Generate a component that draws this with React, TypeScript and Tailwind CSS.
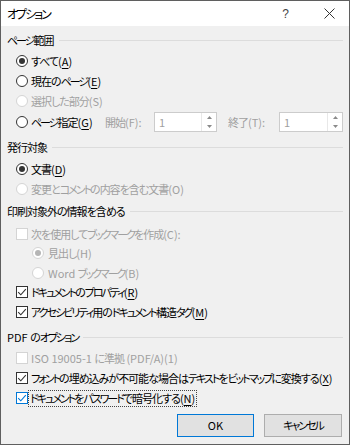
import React from "react";

function kind(ch: string): string {
  const c = ch.codePointAt(0) || 0;
  if (c >= 0x30a0 && c <= 0x30ff) return "k";
  if (c >= 0x3040 && c <= 0x309f) return "h";
  if (c >= 0x4e00 && c <= 0x9fff) return "c";
  return "l";
}

const TRACK: Record<string, string> = {
  k: "tracking-[-2px]",
  h: "tracking-[-1px]",
  c: "tracking-[-1px]",
  l: "",
};

function J({ s }: { s: string }) {
  const runs: { t: string; c: string }[] = [];
  for (const ch of s) {
    const c = kind(ch);
    const last = runs[runs.length - 1];
    if (last && last.c === c) last.t += ch;
    else runs.push({ t: ch, c });
  }
  return (
    <>
      {runs.map((r, i) =>
        r.c === "l" ? (
          <React.Fragment key={i}>{r.t}</React.Fragment>
        ) : (
          <span key={i} className={TRACK[r.c]}>
            {r.t}
          </span>
        )
      )}
    </>
  );
}

function U({ children }: { children: React.ReactNode }) {
  return <span className="underline underline-offset-[2px] decoration-[1px]">{children}</span>;
}

function Heading({ s, className }: { s: string; className: string }) {
  return (
    <div className={`flex items-center h-[20px] ${className}`}>
      <span className="whitespace-nowrap">
        <J s={s} />
      </span>
      <div className="flex-1 h-px bg-[#dcdcdc] ml-[5px]" />
    </div>
  );
}

function Radio({ checked, disabled }: { checked?: boolean; disabled?: boolean }) {
  return (
    <span
      className={`flex items-center justify-center w-[12px] h-[12px] rounded-full border bg-white shrink-0 ${
        disabled ? "border-[#d4d4d4]" : "border-[#333333]"
      }`}
    >
      {checked && (
        <span className={`w-[6px] h-[6px] rounded-full ${disabled ? "bg-[#b5b5b5]" : "bg-[#333333]"}`} />
      )}
    </span>
  );
}

function Check({ checked, disabled, blue }: { checked?: boolean; disabled?: boolean; blue?: boolean }) {
  const border = disabled ? "border-[#d4d4d4]" : blue ? "border-[#0078d7]" : "border-[#333333]";
  const stroke = blue ? "#0078d7" : "#333333";
  return (
    <span className={`flex items-center justify-center w-[12px] h-[12px] border bg-white shrink-0 ${border}`}>
      {checked && (
        <svg width="10" height="10" viewBox="0 0 10 10">
          <path d="M1.2 5.2 L3.8 7.8 L8.8 2.2" fill="none" stroke={stroke} strokeWidth="1.1" />
        </svg>
      )}
    </span>
  );
}

function Spin({ className }: { className: string }) {
  return (
    <div className={`flex h-[20px] border border-[#cccccc] bg-white ${className}`}>
      <span className="flex-1 pl-[4px] text-[#a0a0a0] leading-[18px]">1</span>
      <div className="w-[15px] flex flex-col border-l border-[#e8e8e8]">
        <div className="flex-1 flex items-center justify-center">
          <svg width="5" height="3" viewBox="0 0 5 3">
            <path d="M0 3 L2.5 0 L5 3 Z" fill="#8a8a8a" />
          </svg>
        </div>
        <div className="flex-1 flex items-center justify-center">
          <svg width="5" height="3" viewBox="0 0 5 3">
            <path d="M0 0 L2.5 3 L5 0 Z" fill="#8a8a8a" />
          </svg>
        </div>
      </div>
    </div>
  );
}

export default function App() {
  return (
    <div className="w-[350px] h-[445px] border border-[#5f5f5f] bg-[#f0f0f0] text-[11px] text-black font-['Noto_Sans_CJK_JP',sans-serif] [font-feature-settings:'palt'] flex flex-col overflow-hidden whitespace-nowrap">
      {/* Title bar */}
      <div className="h-[25px] bg-white flex items-center pl-[6px] shrink-0">
        <span className="text-[12px]">
          <J s="オプション" />
        </span>
        <span className="ml-auto mr-[35px] text-[12px] text-[#444] font-['Liberation_Sans',sans-serif]">?</span>
        <svg width="11" height="11" viewBox="0 0 11 11" className="mr-[14px]">
          <path d="M0.5 0.5 L10.5 10.5 M10.5 0.5 L0.5 10.5" stroke="#333333" strokeWidth="1" />
        </svg>
      </div>

      <div className="flex flex-col px-[6px]">
        <Heading className="mt-[4px]" s="ページ範囲" />
        <div className="mt-[1px] flex items-center h-[20px] pl-[9px] gap-[3px]">
          <Radio checked />
          <span>
            <J s="すべて(" />
            <U>A</U>)
          </span>
        </div>
        <div className="flex items-center h-[20px] pl-[9px] gap-[3px]">
          <Radio />
          <span>
            <J s="現在のページ(" />
            <U>E</U>)
          </span>
        </div>
        <div className="flex items-center h-[20px] pl-[9px] gap-[3px] text-[#a0a0a0]">
          <Radio disabled />
          <span>
            <J s="選択した部分(S)" />
          </span>
        </div>
        <div className="flex items-center h-[22px] pl-[9px] gap-[3px]">
          <Radio />
          <span>
            <J s="ページ指定(" />
            <U>G</U>)
          </span>
          <div className="ml-auto flex items-center">
            <span className="w-[49px] text-[#a0a0a0]">
              <J s="開始(F):" />
            </span>
            <Spin className="w-[63px]" />
            <span className="w-[51px] ml-[11px] text-[#a0a0a0]">
              <J s="終了(T):" />
            </span>
            <Spin className="w-[64px]" />
          </div>
        </div>

        <Heading className="mt-[4px]" s="発行対象" />
        <div className="mt-[2px] flex items-center h-[20px] pl-[9px] gap-[3px]">
          <Radio checked />
          <span>
            <J s="文書(" />
            <U>D</U>)
          </span>
        </div>
        <div className="flex items-center h-[20px] pl-[9px] gap-[3px] text-[#a0a0a0]">
          <Radio disabled />
          <span>
            <J s="変更とコメントの内容を含む文書(O)" />
          </span>
        </div>

        <Heading className="mt-[2px]" s="印刷対象外の情報を含める" />
        <div className="mt-[3px] flex items-center h-[19.5px] pl-[9px] gap-[3px] text-[#a0a0a0]">
          <Check disabled />
          <span>
            <J s="次を使用してブックマークを作成(C):" />
          </span>
        </div>
        <div className="flex items-center h-[19.5px] pl-[25px] gap-[4px] text-[#a0a0a0]">
          <Radio checked disabled />
          <span>
            <J s="見出し(H)" />
          </span>
        </div>
        <div className="flex items-center h-[19.5px] pl-[25px] gap-[4px] text-[#a0a0a0]">
          <Radio disabled />
          <span>
            <J s="Word ブックマーク(B)" />
          </span>
        </div>
        <div className="flex items-center h-[19.5px] pl-[9px] gap-[3px]">
          <Check checked />
          <span>
            <J s="ドキュメントのプロパティ(" />
            <U>R</U>)
          </span>
        </div>
        <div className="flex items-center h-[19.5px] pl-[9px] gap-[3px]">
          <Check checked />
          <span>
            <J s="アクセシビリティ用のドキュメント構造タグ(" />
            <U>M</U>)
          </span>
        </div>

        <Heading className="mt-[5.5px]" s="PDF のオプション" />
        <div className="mt-[1px] flex items-center h-[20px] pl-[9px] gap-[3px] text-[#a0a0a0]">
          <Check disabled />
          <span>
            <J s="ISO 19005-1 に準拠 (PDF/A)(1)" />
          </span>
        </div>
        <div className="flex items-center h-[20px] pl-[9px] gap-[3px]">
          <Check checked />
          <span>
            <J s="フォントの埋め込みが不可能な場合はテキストをビットマップに変換する(" />
            <U>X</U>)
          </span>
        </div>
        <div className="flex items-center h-[20px] pl-[9px] gap-[3px]">
          <Check checked blue />
          <span className="ml-[-2px] px-[1px] leading-[15px] outline outline-1 outline-dotted outline-[#444]">
            <J s="ドキュメントをパスワードで暗号化する(" />
            <U>N</U>)
          </span>
        </div>

        <div className="mt-[6px] flex justify-end gap-[10px] mr-[1px]">
          <button className="w-[77px] h-[23px] bg-[#e1e1e1] border border-[#0078d7] text-[11px]">OK</button>
          <button className="w-[78px] h-[23px] bg-[#e1e1e1] border border-[#adadad] text-[11px]">
            <J s="キャンセル" />
          </button>
        </div>
      </div>
    </div>
  );
}
